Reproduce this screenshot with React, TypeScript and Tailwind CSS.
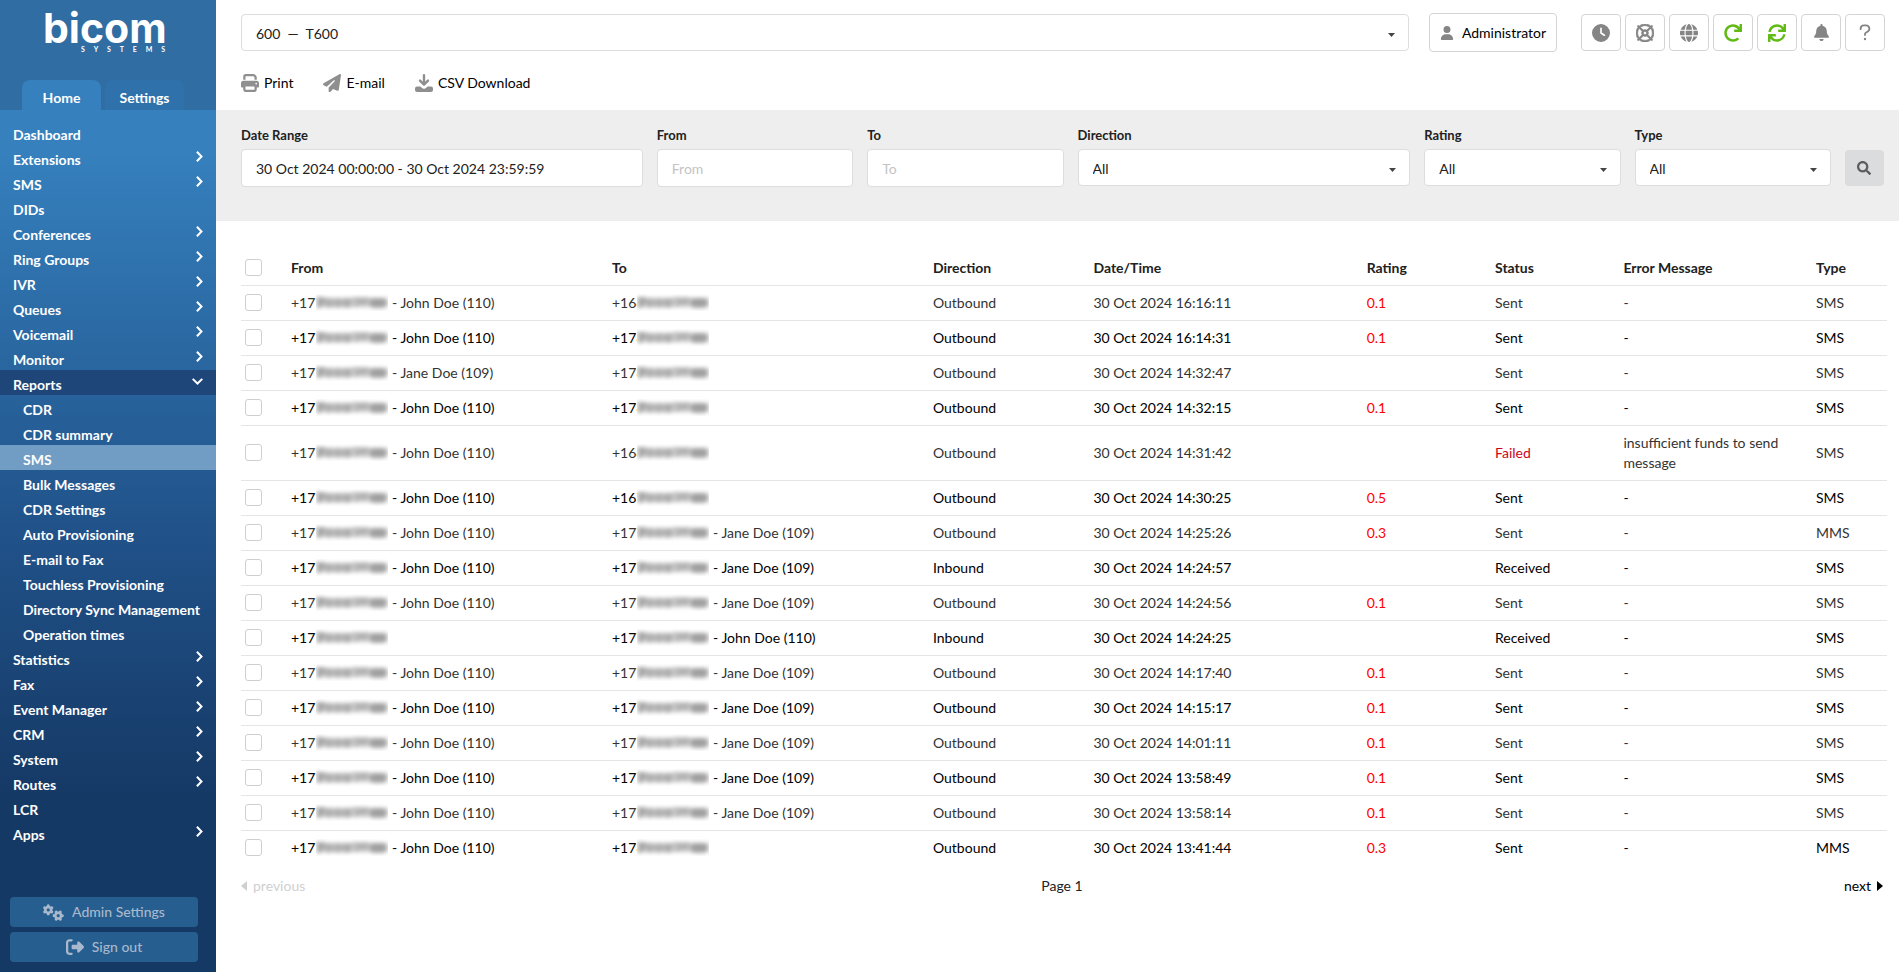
import { useState } from 'react';
import clsx from 'clsx';
import {
  FaBell,
  FaClock,
  FaGears,
  FaGlobe,
  FaPaperPlane,
  FaPrint,
  FaRegLifeRing,
  FaRightFromBracket,
  FaUser,
} from 'react-icons/fa6';
import { FaRedo, FaSearch, FaSync } from 'react-icons/fa';

type MenuItem = { label: string; arrow?: boolean; children?: string[] };

const menu: MenuItem[] = [
  { label: 'Dashboard' },
  { label: 'Extensions', arrow: true },
  { label: 'SMS', arrow: true },
  { label: 'DIDs' },
  { label: 'Conferences', arrow: true },
  { label: 'Ring Groups', arrow: true },
  { label: 'IVR', arrow: true },
  { label: 'Queues', arrow: true },
  { label: 'Voicemail', arrow: true },
  { label: 'Monitor', arrow: true },
  {
    label: 'Reports',
    arrow: true,
    children: [
      'CDR',
      'CDR summary',
      'SMS',
      'Bulk Messages',
      'CDR Settings',
      'Auto Provisioning',
      'E-mail to Fax',
      'Touchless Provisioning',
      'Directory Sync Management',
      'Operation times',
    ],
  },
  { label: 'Statistics', arrow: true },
  { label: 'Fax', arrow: true },
  { label: 'Event Manager', arrow: true },
  { label: 'CRM', arrow: true },
  { label: 'System', arrow: true },
  { label: 'Routes', arrow: true },
  { label: 'LCR' },
  { label: 'Apps', arrow: true },
];

type Message = {
  from: string;
  fromName?: string;
  to: string;
  toName?: string;
  direction?: string;
  date: string;
  rating?: string;
  status?: string;
  error?: string;
  type?: string;
};

const john = 'John Doe (110)';
const jane = 'Jane Doe (109)';

const messages: Message[] = [
  { from: '+177', fromName: john, to: '+166', date: '30 Oct 2024 16:16:11', rating: '0.1' },
  { from: '+177', fromName: john, to: '+178', date: '30 Oct 2024 16:14:31', rating: '0.1' },
  { from: '+177', fromName: jane, to: '+178', date: '30 Oct 2024 14:32:47' },
  { from: '+177', fromName: john, to: '+178', date: '30 Oct 2024 14:32:15', rating: '0.1' },
  { from: '+177', fromName: john, to: '+166', date: '30 Oct 2024 14:31:42', status: 'Failed', error: 'insufficient funds to send message' },
  { from: '+177', fromName: john, to: '+167', date: '30 Oct 2024 14:30:25', rating: '0.5' },
  { from: '+177', fromName: john, to: '+177', toName: jane, date: '30 Oct 2024 14:25:26', rating: '0.3', type: 'MMS' },
  { from: '+177', fromName: john, to: '+177', toName: jane, direction: 'Inbound', date: '30 Oct 2024 14:24:57', status: 'Received' },
  { from: '+177', fromName: john, to: '+177', toName: jane, date: '30 Oct 2024 14:24:56', rating: '0.1' },
  { from: '+177', to: '+177', toName: john, direction: 'Inbound', date: '30 Oct 2024 14:24:25', status: 'Received' },
  { from: '+177', fromName: john, to: '+177', toName: jane, date: '30 Oct 2024 14:17:40', rating: '0.1' },
  { from: '+177', fromName: john, to: '+177', toName: jane, date: '30 Oct 2024 14:15:17', rating: '0.1' },
  { from: '+177', fromName: john, to: '+177', toName: jane, date: '30 Oct 2024 14:01:11', rating: '0.1' },
  { from: '+177', fromName: john, to: '+177', toName: jane, date: '30 Oct 2024 13:58:49', rating: '0.1' },
  { from: '+177', fromName: john, to: '+177', toName: jane, date: '30 Oct 2024 13:58:14', rating: '0.1' },
  { from: '+177', fromName: john, to: '+178', date: '30 Oct 2024 13:41:44', rating: '0.3', type: 'MMS' },
];

const headerButtons = [
  { label: 'Clock', icon: <FaClock size={18} /> },
  { label: 'Support', icon: <FaRegLifeRing size={18} stroke="currentColor" strokeWidth={20} /> },
  { label: 'Language', icon: <FaGlobe size={18} /> },
  { label: 'Reload', icon: <FaRedo size={18} className="text-[#62bb14]" /> },
  { label: 'Restart', icon: <FaSync size={18} className="text-[#62bb14]" /> },
  { label: 'Notifications', icon: <FaBell size={17} /> },
  { label: 'Help', icon: <HelpIcon /> },
];

function HelpIcon() {
  return (
    <svg width="12" height="18" viewBox="0 0 12 18" fill="none" stroke="currentColor" strokeWidth="1.8" strokeLinecap="round" strokeLinejoin="round">
      <path d="M1.6 5.2V4.6A3.4 3.4 0 0 1 5 1.4h2a3.3 3.3 0 0 1 1.8 6.1L6.8 8.7a1.6 1.6 0 0 0-.8 1.4v1" />
      <circle cx="6" cy="15" r="1.2" fill="currentColor" stroke="none" />
    </svg>
  );
}

function DownloadIcon() {
  return (
    <svg width="18" height="18" viewBox="0 0 18 18" fill="none" stroke="currentColor" strokeLinecap="round" strokeLinejoin="round">
      <path d="M9 1.2v9M5 6.6l4 4 4-4" strokeWidth="2.4" />
      <path d="M2 12.4h3.2l2.3 1.8a2.4 2.4 0 0 0 3 0l2.3-1.8H16a2 2 0 0 1 2 2V16a2 2 0 0 1-2 2H2a2 2 0 0 1-2-2v-1.6a2 2 0 0 1 2-2z" fill="currentColor" stroke="none" />
    </svg>
  );
}

function Chevron({ open }: { open?: boolean }) {
  return open ? (
    <svg width="11" height="7" viewBox="0 0 11 7" fill="none" stroke="currentColor" strokeWidth="2" className="mt-2">
      <path d="M.7.9l4.8 4.6L10.3.9" />
    </svg>
  ) : (
    <svg width="7" height="11" viewBox="0 0 7 11" fill="none" stroke="currentColor" strokeWidth="2" className="mt-1.5">
      <path d="M.9.7l4.6 4.8L.9 10.3" />
    </svg>
  );
}

function Caret() {
  return (
    <svg width="7" height="4" viewBox="0 0 7 4" className="pointer-events-none absolute right-3.5 top-1/2 fill-[#444]">
      <path d="M0 0h7L3.5 4z" />
    </svg>
  );
}

const fieldClass = 'w-full rounded border border-[#dcdddd] bg-white px-3.5 text-sm text-[#212121] outline-none placeholder:text-[#c4c4c4]';

function Select({ id, value, label }: { id: string; value: string; label?: string }) {
  return (
    <div className="relative">
      <select id={id} aria-label={label} className={clsx(fieldClass, 'block h-[37px] appearance-none pt-0.5')}>
        <option>{value}</option>
      </select>
      <Caret />
    </div>
  );
}

function Field({ id, label, children }: { id: string; label: string; children: React.ReactNode }) {
  return (
    <div className="min-w-0">
      <label htmlFor={id} className="mb-1 block text-[13px] leading-5 font-bold text-[#212121]">{label}</label>
      {children}
    </div>
  );
}

function Smear() {
  return (
    <svg width="72" height="17" viewBox="0 0 72 17" className="relative -ml-[7px] shrink-0 bg-white" aria-hidden="true">
      <g className="blur-[2px]" fill="#8a8a8a">
        <rect x="0" y="4" width="72" height="9" opacity=".45" />
        <path d="M0 3h9v3l-4 8H1l2-8H0z" opacity=".6" />
        <rect x="9" y="4" width="8" height="10" rx="3" opacity=".4" />
        <rect x="18" y="4" width="8" height="10" rx="3" opacity=".4" />
        <rect x="27" y="4" width="8" height="10" rx="3" opacity=".45" />
        <path d="M36 3h17v3l-4 5h-3l-1-3-4 5h-3l3-7h-5z" opacity=".4" />
        <rect x="54" y="4" width="16" height="10" rx="4" opacity=".65" />
      </g>
    </svg>
  );
}

// Phone number with everything after its prefix smeared out
function MaskedNumber({ prefix, name }: { prefix: string; name?: string }) {
  return (
    <span className="flex items-center whitespace-pre">
      <span>{prefix}</span>
      <Smear />
      {name && <span> - {name}</span>}
    </span>
  );
}

function Checkbox({ label }: { label: string }) {
  return (
    <input
      type="checkbox"
      aria-label={label}
      className="ml-1 block size-[17px] appearance-none rounded-[3px] border border-[#cfcfd0] bg-white checked:bg-[#3580bd]"
    />
  );
}

function Sidebar() {
  const [active, setActive] = useState('SMS');

  return (
    <aside className="flex w-[216px] shrink-0 flex-col bg-[#306da3] text-white">
      <div className="flex h-[110px] flex-col justify-between">
        <div className="w-[165px] pt-3 pl-[43px]">
          <div className="font-[Inter,sans-serif] text-[41px] leading-8 font-bold">bicom</div>
          <div className="flex justify-between pl-[38px] text-[7px] leading-[10px] font-bold">
            {'SYSTEMS'.split('').map((c, i) => <span key={i}>{c}</span>)}
          </div>
        </div>
        <div className="flex gap-1 pl-[22px] text-sm font-bold">
          <button className="h-[30px] w-[79px] rounded-t-lg bg-[#3580bd] pt-1.5">Home</button>
          <button className="h-[30px] w-[79px] rounded-t-lg bg-[#2f71aa] pt-1.5">Settings</button>
        </div>
      </div>

      <div className="flex grow flex-col justify-between bg-linear-to-b from-[#3580bd] from-5% via-[#205188] via-50% to-[#153965] to-80%">
        <nav className="pt-2.5 text-sm leading-5 font-bold">
          {menu.map(item => (
            <div key={item.label}>
              <a
                href="#"
                className={clsx('flex h-[25px] items-start justify-between px-[13px]', item.children && 'bg-[#1e4679]')}
              >
                <span className="pt-[5px]">{item.label}</span>
                {item.arrow && <Chevron open={!!item.children} />}
              </a>
              {item.children?.map(child => (
                <a
                  key={child}
                  href="#"
                  onClick={() => setActive(child)}
                  className={clsx('block h-[25px] pt-[5px] pl-[23px] whitespace-nowrap', child === active && 'bg-[#719dc5]')}
                >
                  {child}
                </a>
              ))}
            </div>
          ))}
        </nav>

        <div className="flex flex-col gap-[5px] pt-10 pr-[18px] pb-2.5 pl-2.5 text-sm font-medium text-[#a9b8cc]">
          <button className="flex h-[30px] items-center justify-center gap-2 rounded bg-[#265f8f]">
            <FaGears size={21} /> Admin Settings
          </button>
          <button className="flex h-[30px] items-center justify-center gap-2 rounded bg-[#265f8f]">
            <FaRightFromBracket size={18} /> Sign out
          </button>
        </div>
      </div>
    </aside>
  );
}

export default function App() {
  return (
    <div className="flex min-h-screen bg-white font-[Lato,sans-serif] text-sm text-black">
      <Sidebar />

      <main className="min-w-0 grow">
        {/* Top bar */}
        <header className="flex items-center pt-[13px] pr-3.5 pl-[25px]">
          <div className="grow">
            <Select id="tenant" label="Tenant" value={'600 \u00a0—\u00a0 T600'} />
          </div>
          <button className="ml-5 flex h-[39px] w-32 items-center justify-center gap-2 rounded border border-[#d4d4d5]">
            <FaUser size={14} className="text-[#858585]" /> Administrator
          </button>
          <div className="ml-6 flex gap-1">
            {headerButtons.map(b => (
              <button
                key={b.label}
                aria-label={b.label}
                className="flex h-[37px] w-10 items-center justify-center rounded border border-[#d4d4d5] text-[#858585]"
              >
                {b.icon}
              </button>
            ))}
          </div>
        </header>

        <div className="flex h-[58px] items-center gap-[30px] pt-1 pl-[25px]">
          <button className="flex items-center gap-[5px]"><FaPrint size={18} className="text-[#8f8f8f]" /> Print</button>
          <button className="flex items-center gap-[5px]"><FaPaperPlane size={18} className="text-[#8f8f8f]" /> E-mail</button>
          <button className="flex items-center gap-[5px]"><span className="text-[#8f8f8f]"><DownloadIcon /></span> CSV Download</button>
        </div>

        {/* Filters */}
        <form className="grid h-[111px] grid-cols-[401fr_196fr_196fr_332fr_196fr_196fr_39px] items-start gap-3.5 bg-[#eee] pt-[15px] pr-[15px] pl-[25px]">
          <Field id="range" label="Date Range">
            <input id="range" className={clsx(fieldClass, 'h-[38px]')} defaultValue="30 Oct 2024 00:00:00 - 30 Oct 2024 23:59:59" />
          </Field>
          <Field id="from" label="From">
            <input id="from" className={clsx(fieldClass, 'h-[38px]')} placeholder="From" />
          </Field>
          <Field id="to" label="To">
            <input id="to" className={clsx(fieldClass, 'h-[38px]')} placeholder="To" />
          </Field>
          <Field id="direction" label="Direction"><Select id="direction" value="All" /></Field>
          <Field id="rating" label="Rating"><Select id="rating" value="All" /></Field>
          <Field id="type" label="Type"><Select id="type" value="All" /></Field>
          <button type="button" aria-label="Search" className="mt-[25px] flex h-9 items-center justify-center rounded bg-[#dbdcde] text-[#5c5c5c]">
            <FaSearch size={14} />
          </button>
        </form>

        {/* Messages */}
        <div className="pt-7 pr-3 pl-[25px]">
          <table className="w-full table-fixed text-left">
            <colgroup>
              <col className="w-[50px]" />
              <col className="w-[19.5%]" />
              <col className="w-[19.5%]" />
              <col className="w-[9.75%]" />
              <col className="w-[16.6%]" />
              <col className="w-[7.8%]" />
              <col className="w-[7.8%]" />
              <col className="w-[11.7%]" />
              <col />
            </colgroup>
            <thead>
              <tr className="h-9 border-b border-[#e5e5e6] text-[#212121]">
                <th className="pt-0.5"><Checkbox label="Select all" /></th>
                {['From', 'To', 'Direction', 'Date/Time', 'Rating', 'Status', 'Error Message', 'Type'].map(h => (
                  <th key={h} className="pt-0.5 font-bold">{h}</th>
                ))}
              </tr>
            </thead>
            <tbody>
              {messages.map(m => (
                <tr key={m.date} className="h-[35px] border-b border-[#e5e5e6] text-[#333] last:border-b-0 even:text-black">
                  <td><Checkbox label={`Select ${m.date}`} /></td>
                  <td><MaskedNumber prefix={m.from} name={m.fromName} /></td>
                  <td><MaskedNumber prefix={m.to} name={m.toName} /></td>
                  <td>{m.direction ?? 'Outbound'}</td>
                  <td>{m.date}</td>
                  <td className="text-[#f00]">{m.rating}</td>
                  <td className={clsx(m.status === 'Failed' && 'text-[#d0021b]')}>{m.status ?? 'Sent'}</td>
                  <td className={clsx('pr-4', m.error && 'py-[7px]')}>{m.error ?? '-'}</td>
                  <td>{m.type ?? 'SMS'}</td>
                </tr>
              ))}
            </tbody>
          </table>

          <div className="grid grid-cols-3 items-center pt-[11px] pr-1">
            <button disabled className="flex items-center gap-1.5 text-[#cfcfcf]">
              <svg width="6" height="10" viewBox="0 0 6 10" fill="currentColor"><path d="M6 0v10L0 5z" /></svg>
              previous
            </button>
            <span className="text-center text-[#212121]">Page 1</span>
            <button className="flex items-center gap-1.5 justify-self-end">
              next
              <svg width="6" height="10" viewBox="0 0 6 10" fill="currentColor"><path d="M0 0v10l6-5z" /></svg>
            </button>
          </div>
        </div>
      </main>
    </div>
  );
}
